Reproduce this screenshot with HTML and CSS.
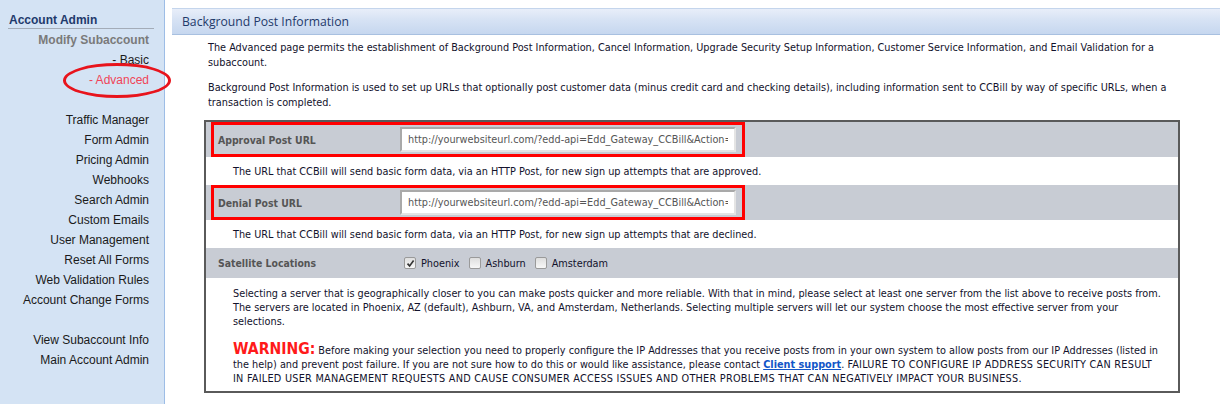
FILE: index.html
```html
<!DOCTYPE html>
<html>
<head>
    <title>Background Post Information</title>
    <link rel="stylesheet" href="styles.css">
</head>
<body>
    <div class="sidebar">
        <div class="side-title">Account Admin</div>
        <ul class="side-menu">
            <li class="side-head">Modify Subaccount</li>
            <li><a href="#">- Basic</a></li>
            <li><a href="#" class="current">- Advanced</a><span class="circle"></span></li>
            <li class="gap"></li>
            <li><a href="#">Traffic Manager</a></li>
            <li><a href="#">Form Admin</a></li>
            <li><a href="#">Pricing Admin</a></li>
            <li><a href="#">Webhooks</a></li>
            <li><a href="#">Search Admin</a></li>
            <li><a href="#">Custom Emails</a></li>
            <li><a href="#">User Management</a></li>
            <li><a href="#">Reset All Forms</a></li>
            <li><a href="#">Web Validation Rules</a></li>
            <li><a href="#">Account Change Forms</a></li>
            <li class="gap"></li>
            <li><a href="#">View Subaccount Info</a></li>
            <li><a href="#">Main Account Admin</a></li>
        </ul>
    </div>

    <div class="content">
        <div class="section-head">Background Post Information</div>

        <p class="intro">The Advanced page permits the establishment of Background Post Information, Cancel Information, Upgrade Security Setup Information, Customer Service Information, and Email Validation for a subaccount.</p>
        <p class="intro">Background Post Information is used to set up URLs that optionally post customer data (minus credit card and checking details), including information sent to CCBill by way of specific URLs, when a transaction is completed.</p>

        <div class="post-table">
            <div class="row field-row">
                <div class="marked">
                    <label class="field-label" for="approvalUrl">Approval Post URL</label>
                    <input type="text" id="approvalUrl" class="url-input" value="http://yourwebsiteurl.com/?edd-api=Edd_Gateway_CCBill&amp;Action=Approval">
                </div>
            </div>
            <div class="row desc-row">The URL that CCBill will send basic form data, via an HTTP Post, for new sign up attempts that are approved.</div>

            <div class="row field-row">
                <div class="marked">
                    <label class="field-label" for="denialUrl">Denial Post URL</label>
                    <input type="text" id="denialUrl" class="url-input" value="http://yourwebsiteurl.com/?edd-api=Edd_Gateway_CCBill&amp;Action=Denial">
                </div>
            </div>
            <div class="row desc-row">The URL that CCBill will send basic form data, via an HTTP Post, for new sign up attempts that are declined.</div>

            <div class="row field-row sat-row">
                <span class="field-label">Satellite Locations</span>
                <div class="locations">
                    <span class="check checked"><svg width="9" height="9" viewBox="0 0 9 9"><path d="M1.5 4.6 L3.6 6.9 L7.6 1.6" fill="none" stroke="#333" stroke-width="1.6"/></svg></span>
                    <span class="loc">Phoenix</span>
                    <span class="check"></span>
                    <span class="loc">Ashburn</span>
                    <span class="check"></span>
                    <span class="loc">Amsterdam</span>
                </div>
            </div>

            <div class="notes">
                <p>Selecting a server that is geographically closer to you can make posts quicker and more reliable. With that in mind, please select at least one server from the list above to receive posts from. The servers are located in Phoenix, AZ (default), Ashburn, VA, and Amsterdam, Netherlands. Selecting multiple servers will let our system choose the most effective server from your selections.</p>
                <p class="warning"><span class="warn-word">WARNING:</span> Before making your selection you need to properly configure the IP Addresses that you receive posts from in your own system to allow posts from our IP Addresses (listed in the help) and prevent post failure. If you are not sure how to do this or would like assistance, please contact <a href="#">Client support</a>. <span class="caps">FAILURE TO CONFIGURE IP ADDRESS SECURITY CAN RESULT IN FAILED USER MANAGEMENT REQUESTS AND CAUSE CONSUMER ACCESS ISSUES AND OTHER PROBLEMS THAT CAN NEGATIVELY IMPACT YOUR BUSINESS.</span></p>
            </div>
        </div>
    </div>
</body>
</html>
```

FILE: styles.css
```css
body {
    margin: 0;
    display: flex;
    min-height: 404px;
    background-color: #fff;
    font-family: "DejaVu Sans Condensed", "DejaVu Sans", sans-serif;
    font-size: 10.8px;
    color: #12122c;
}

/* left menu */
.sidebar {
    width: 164px;
    flex-shrink: 0;
    background-color: #d4e3f4;
    border-right: 1px solid #9dbde6;
    font-family: "Liberation Sans", Arial, sans-serif;
    font-size: 12px;
}

.side-title {
    margin: 14px 10px 0 8px;
    padding: 0 0 1px 1px;
    line-height: 13px;
    font-weight: bold;
    color: #1f3a6c;
    border-bottom: 1px solid #a3acb8;
}

.side-menu {
    list-style: none;
    margin: 0;
    padding: 1px 15px 0 0;
    text-align: right;
    line-height: 20px;
}

.side-menu li {
    height: 20px;
    position: relative;
}

.side-menu a {
    color: #1a1a1a;
    text-decoration: none;
}

.side-menu a.current {
    color: #f04458;
}

.side-head {
    font-weight: bold;
    color: #7a7a7a;
}

/* red ring drawn around the current page */
.circle {
    position: absolute;
    left: 63px;
    top: -7px;
    width: 102px;
    height: 29px;
    border: 3px solid #e8141c;
    border-radius: 50%;
}

/* main area */
.content {
    flex: 1;
    padding: 8px 0 0 7px;
}

.section-head {
    height: 25px;
    padding-left: 10px;
    line-height: 25px;
    font-family: "Open Sans", "Noto Sans", sans-serif;
    font-size: 12.2px;
    color: #1f3a6a;
    background: linear-gradient(#e8eef9, #d6e2f4 45%, #c6d7ef);
    border-top: 1px solid #c4d5ec;
    border-bottom: 1px solid #a8c0e0;
}

.intro {
    margin: 5px 10px 10px 36px;
    line-height: 15px;
}

.post-table {
    margin: 9px 40px 0 32px;
    border: 2px solid #5a5a5a;
}

.row {
    display: flex;
    align-items: center;
}

.field-row {
    height: 35px;
    background-color: #c8ccd4;
}

.marked {
    display: flex;
    align-items: center;
    box-sizing: border-box;
    width: 534px;
    height: 35px;
    margin-left: 5px;
    padding: 0 6px 0 4px;
    border: 3px solid #ff0000;
}

.field-label {
    width: 182px;
    font-size: 10.4px;
    font-weight: bold;
    color: #555;
}

.url-input {
    box-sizing: border-box;
    width: 336px;
    height: 25px;
    padding: 0 6px;
    font-family: inherit;
    font-size: 10.8px;
    color: #555;
    background-color: #fff;
    border: 2px solid;
    border-color: #a9a9a9 #e4e4e4 #e4e4e4 #a9a9a9;
}

.desc-row {
    height: 28px;
    padding-left: 27px;
    background-color: #fff;
}

.sat-row {
    height: 30px;
    padding-left: 12px;
}

.sat-row .field-label {
    width: 186px;
}

.locations {
    display: flex;
    align-items: center;
}

.check {
    display: inline-flex;
    align-items: center;
    justify-content: center;
    box-sizing: border-box;
    width: 12px;
    height: 12px;
    margin-right: 5px;
    border: 1px solid #9a9a9a;
    border-radius: 2px;
    background: linear-gradient(#dedede, #f7f7f7);
}

.loc {
    margin-right: 9px;
}

.notes {
    padding: 9px 15px 5px 27px;
    line-height: 14px;
}

.notes p {
    margin: 0;
}

.notes .warning {
    margin-top: 13px;
}

.warn-word {
    font-size: 15.6px;
    line-height: 14px;
    font-weight: bold;
    color: #ff1a1a;
}

.caps {
    letter-spacing: 0.25px;
}

.notes a {
    font-weight: bold;
    color: #1256c8;
}
```
